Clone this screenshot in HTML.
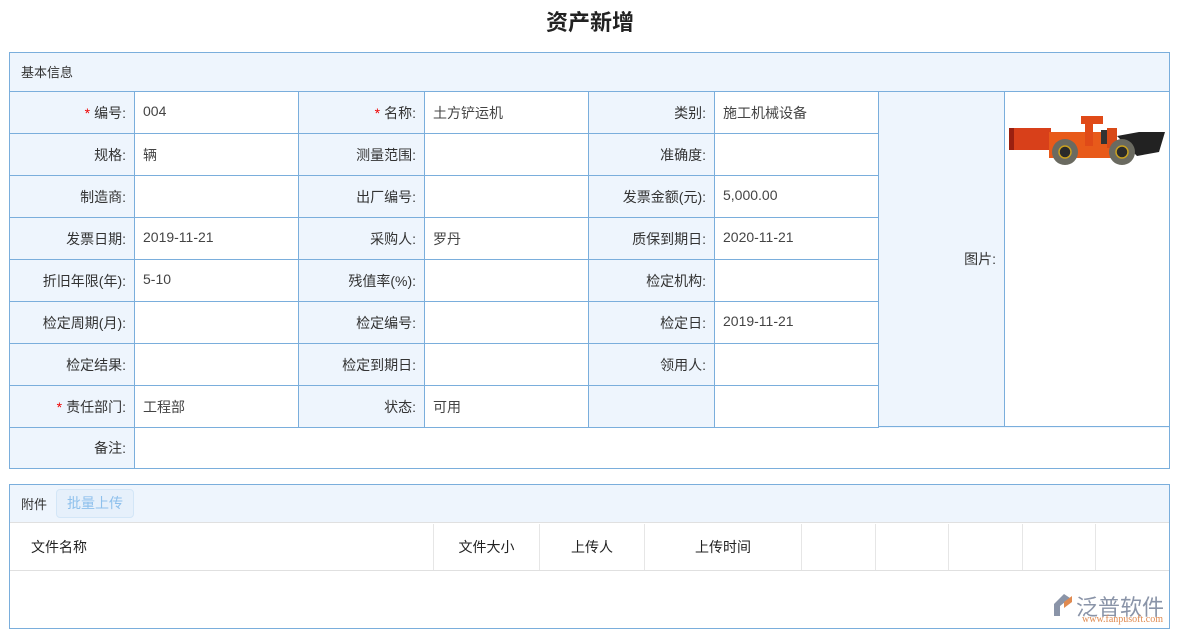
<!DOCTYPE html>
<html><head><meta charset="utf-8"><style>
*{margin:0;padding:0;box-sizing:border-box}
body{width:1180px;height:637px;background:#fff;font-family:"Liberation Sans","Noto Sans CJK SC",sans-serif;font-size:14px;color:#333;position:relative;overflow:hidden}
.a{position:absolute}
.title{left:0;width:1180px;top:5px;text-align:center;font-size:22px;font-weight:bold;color:#222}
.c{position:absolute;border-right:1px solid #7aaedc;border-bottom:1px solid #7aaedc;display:flex;align-items:center;padding:0 8px}
.l{background:#eef5fd;justify-content:flex-end;color:#333}
.v{background:#fff;color:#444}
.r{color:#e00;margin-right:4px}
</style></head><body>
<div class="a title">资产新增</div>
<div class="a" style="left:9px;top:52px;width:1161px;height:417px;border:1px solid #7aaedc;background:#eef5fd"></div>
<div class="a" style="left:10px;top:91px;width:1159px;height:1px;background:#7aaedc"></div>
<div class="a" style="left:21px;top:62px;font-size:13px">基本信息</div>
<div id="g"></div>
<div class="a" style="left:9px;top:484px;width:1161px;height:145px;border:1px solid #7aaedc"></div>
<div class="a" style="left:10px;top:485px;width:1159px;height:38px;background:#eef5fd;border-bottom:1px solid #e0e0e0"></div>
<div class="a" style="left:21px;top:494px;font-size:13px">附件</div>
<div class="a" style="left:56px;top:489px;width:78px;height:29px;border:1px solid #d3e6f7;border-radius:4px;background:#e6f0fb;color:#8ec0ec;text-align:center;line-height:27px;font-size:14px">批量上传</div>
<div class="a" style="left:10px;top:570px;width:1159px;height:1px;background:#e0e0e0"></div>
<div id="h"></div>
<div class="a" style="left:1050px;top:592px;width:26px;height:26px"><svg width="26" height="26"><path d="M14 2 L4 12 L4 24 L10 24 L10 14 L20 6Z" fill="#8a94a8"/><path d="M14 10 L22 4 L22 10 L14 16Z" fill="#e08a50"/></svg></div>
<div class="a" style="left:1076px;top:590px;font-size:22px;color:#8a94a8;letter-spacing:0px">泛普软件</div>
<div class="a" style="left:1082px;top:614px;font-size:10px;color:#e08a50;font-family:'Liberation Serif',serif">www.fanpusoft.com</div>
<script>
var g=document.getElementById('g'),h='';
var cols=[9,135,299,425,589,715,879];
var rows=[91,133,175,217,259,301,343,385,427];
var d=[
[['*编号:'],'004',['*名称:'],'土方铲运机',['类别:'],'施工机械设备'],
[['规格:'],'辆',['测量范围:'],'',['准确度:'],''],
[['制造商:'],'',['出厂编号:'],'',['发票金额(元):'],'5,000.00'],
[['发票日期:'],'2019-11-21',['采购人:'],'罗丹',['质保到期日:'],'2020-11-21'],
[['折旧年限(年):'],'5-10',['残值率(%):'],'',['检定机构:'],''],
[['检定周期(月):'],'',['检定编号:'],'',['检定日:'],'2019-11-21'],
[['检定结果:'],'',['检定到期日:'],'',['领用人:'],''],
[['*责任部门:'],'工程部',['状态:'],'可用',[''],'']];
for(var r=0;r<8;r++)for(var c=0;c<6;c++){var x=d[r][c],lab=typeof x!='string',t=lab?x[0]:x;
if(lab&&t[0]=='*')t='<span class="r">*</span>'+t.slice(1);
h+='<div class="c '+(lab?'l':'v')+'" style="left:'+(cols[c]+(c==0?1:0))+'px;top:'+(rows[r]+1)+'px;width:'+(cols[c+1]-cols[c]-(c==0?1:0))+'px;height:42px;'+(lab?'':'align-items:flex-start;padding-top:11px;')+'">'+t+'</div>';}
h+='<div class="c l" style="left:879px;top:92px;width:126px;height:335px">图片:</div>';
h+='<div class="c v" style="left:1005px;top:92px;width:164px;height:335px;border-right:none;align-items:flex-start;padding:20px 0 0 4px"><svg width="156" height="58"><rect x="2" y="16" width="40" height="22" fill="#d8401a"/><rect x="0" y="16" width="5" height="22" fill="#9a2010"/><rect x="40" y="20" width="65" height="26" fill="#e85a1a"/><rect x="72" y="4" width="22" height="8" fill="#e04a18"/><rect x="76" y="4" width="8" height="30" fill="#e04a18"/><rect x="92" y="18" width="6" height="14" fill="#333"/><path d="M108 24 L130 20 L156 20 L150 40 L128 44Z" fill="#222"/><rect x="98" y="16" width="10" height="20" fill="#d84a18"/><circle cx="56" cy="40" r="13" fill="#6a6a60"/><circle cx="56" cy="40" r="6" fill="#2a2a2a" stroke="#c8a020" stroke-width="1.5"/><circle cx="113" cy="40" r="13" fill="#6a6a60"/><circle cx="113" cy="40" r="6" fill="#2a2a2a" stroke="#c8a020" stroke-width="1.5"/></svg></div>';
h+='<div class="c l" style="left:10px;top:428px;width:125px;height:40px;border-bottom:none">备注:</div>';
h+='<div class="c v" style="left:135px;top:428px;width:1034px;height:40px;border-right:none;border-bottom:none"></div>';
g.innerHTML=h;
var hc=[9,433,539,644,801,875,948,1022,1095,1169],ht=['文件名称','文件大小','上传人','上传时间','','','','',''],s='';
for(var i=0;i<9;i++)s+='<div class="a" style="left:'+(hc[i]+1)+'px;top:524px;width:'+(hc[i+1]-hc[i]-(i<8?0:1))+'px;height:46px;'+(i<8?'border-right:1px solid #e6e6e6;':'')+'display:flex;align-items:center;'+(i==0?'padding-left:21px':'justify-content:center')+';color:#222">'+ht[i]+'</div>';
document.getElementById('h').innerHTML=s;
</script>
</body></html>
